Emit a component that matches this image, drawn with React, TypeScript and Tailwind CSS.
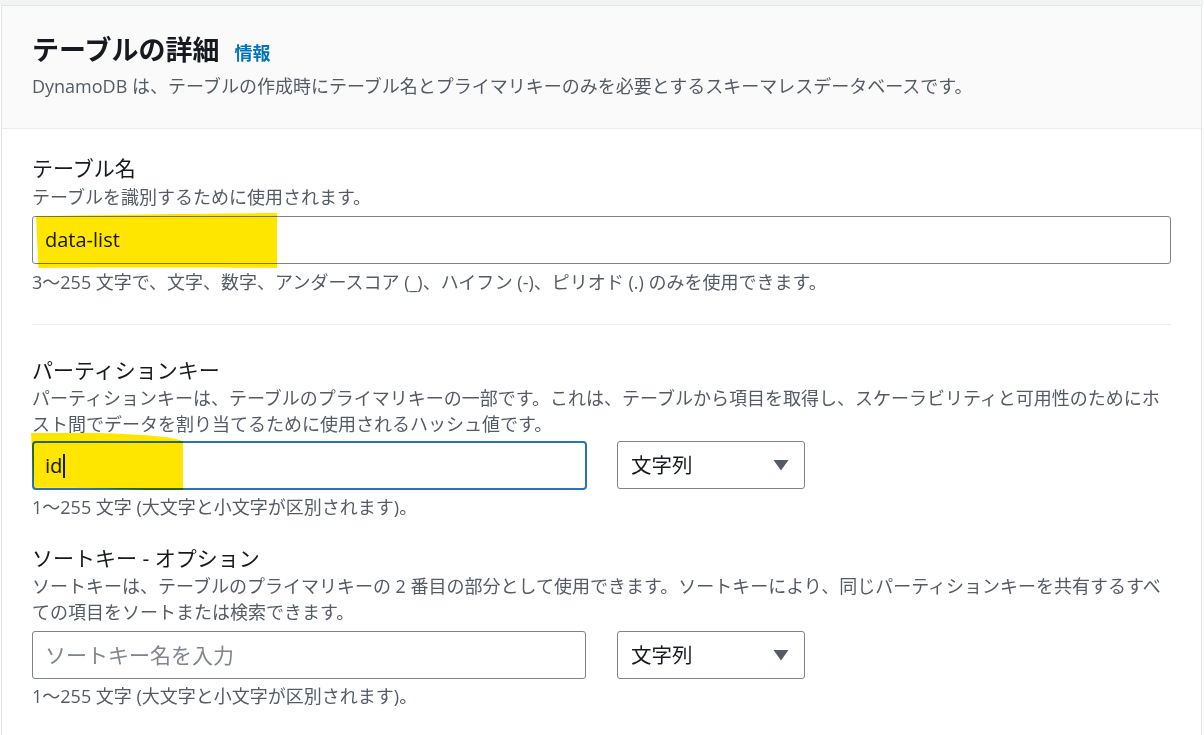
const font = "font-['Open_Sans','Noto_Sans_CJK_JP',sans-serif]";

function Marker({ d, className }: { d: string; className: string }) {
  return (
    <svg
      className={`pointer-events-none absolute mix-blend-multiply ${className}`}
      viewBox="0 0 100 100"
      preserveAspectRatio="none"
      aria-hidden
    >
      <path d={d} fill="#ffe600" />
    </svg>
  );
}

function Select() {
  return (
    <div className="flex h-[48px] w-[188px] shrink-0 items-center justify-between rounded-[3px] border border-[#7d8389] bg-white pl-[13px] pr-[15px] text-[20.5px] leading-[28px] text-[#16191f]">
      <span>文字列</span>
      <svg width="16" height="12" viewBox="0 0 16 12" aria-hidden>
        <path d="M0.5 1h15L8 11.5z" fill="#545b64" />
      </svg>
    </div>
  );
}

export default function App() {
  return (
    <div className={`${font} flex h-[735px] flex-col overflow-hidden bg-white`}>
      <div className="h-[5px] shrink-0 bg-[#f2f3f3]" />
      <div className="ml-px w-[1201px] flex-1 border border-b-0 border-[#e3e6e8] bg-white">
        <div className="border-b border-[#eaeded] bg-[#fafafa] px-[30px] pb-[29px] pt-[27px]">
          <div className="flex items-baseline gap-[15px]">
            <h2 className="text-[27px] font-bold leading-[34px] text-[#16191f]">テーブルの詳細</h2>
            <a className="text-[18px] font-bold leading-[26px] text-[#0073bb]">情報</a>
          </div>
          <p className="mt-[6px] text-[18px] leading-[26px] text-[#545b64]">
            DynamoDB は、テーブルの作成時にテーブル名とプライマリキーのみを必要とするスキーマレスデータベースです。
          </p>
        </div>

        <div className="px-[30px] pt-[25px]">
          <label className="block text-[21px] leading-[28px] text-[#16191f]">テーブル名</label>
          <p className="mt-[2px] text-[18px] leading-[26px] text-[#545b64]">テーブルを識別するために使用されます。</p>
          <div className="relative mt-[6px]">
            <div className="flex h-[48px] items-center rounded-[3px] border border-[#7d8389] bg-white pl-[12px] text-[20px] text-[#16191f]">
              data-list
            </div>
            <Marker
              className="left-[4px] top-[-3px] h-[55px] w-[241px]"
              d="M0 6 C20 4 60 1 100 0 L100 100 C70 99 30 99 1 100 Z"
            />
          </div>
          <p className="mt-[5px] text-[18px] leading-[26px] text-[#545b64]">
            3〜255 文字で、文字、数字、アンダースコア (_)、ハイフン (-)、ピリオド (.) のみを使用できます。
          </p>
          <div className="mt-[29px] h-px bg-[#eaeded]" />

          <label className="mt-[31px] block text-[21px] leading-[28px] text-[#16191f]">パーティションキー</label>
          <p className="mt-px text-[18px] leading-[26px] text-[#545b64]">
            パーティションキーは、テーブルのプライマリキーの一部です。これは、テーブルから項目を取得し、スケーラビリティと可用性のためにホスト間でデータを割り当てるために使用されるハッシュ値です。
          </p>
          <div className="mt-[4px] flex gap-[30px]">
            <div className="relative">
              <div className="flex h-[49px] w-[555px] items-center rounded-[4px] border-2 border-[#2d72b6] bg-white pl-[11px] text-[20px] text-[#16191f]">
                id
                <span className="ml-px inline-block h-[24px] w-[2px] bg-[#16191f]" />
              </div>
              <Marker
                className="left-[-1px] top-[-8px] h-[57px] w-[152px]"
                d="M0 0 C40 -2 70 2 85 6 C92 8 100 12 100 16 L100 100 L74 100 C60 97 30 96 2 96 Z"
              />
            </div>
            <Select />
          </div>
          <p className="mt-[4px] text-[18px] leading-[26px] text-[#545b64]">1〜255 文字 (大文字と小文字が区別されます)。</p>

          <label className="mt-[24px] block text-[21px] leading-[28px] text-[#16191f]">ソートキー - オプション</label>
          <p className="mt-px text-[18px] leading-[26px] text-[#545b64]">
            ソートキーは、テーブルのプライマリキーの 2 番目の部分として使用できます。ソートキーにより、同じパーティションキーを共有するすべての項目をソートまたは検索できます。
          </p>
          <div className="mt-[6px] flex gap-[31px]">
            <input
              readOnly
              placeholder="ソートキー名を入力"
              className="h-[48px] w-[554px] rounded-[3px] border border-[#7d8389] bg-white pl-[12px] text-[21px] text-[#16191f] outline-none placeholder:text-[#7f868d]"
            />
            <Select />
          </div>
          <p className="mt-[4px] text-[18px] leading-[26px] text-[#545b64]">1〜255 文字 (大文字と小文字が区別されます)。</p>
        </div>
      </div>
    </div>
  );
}
